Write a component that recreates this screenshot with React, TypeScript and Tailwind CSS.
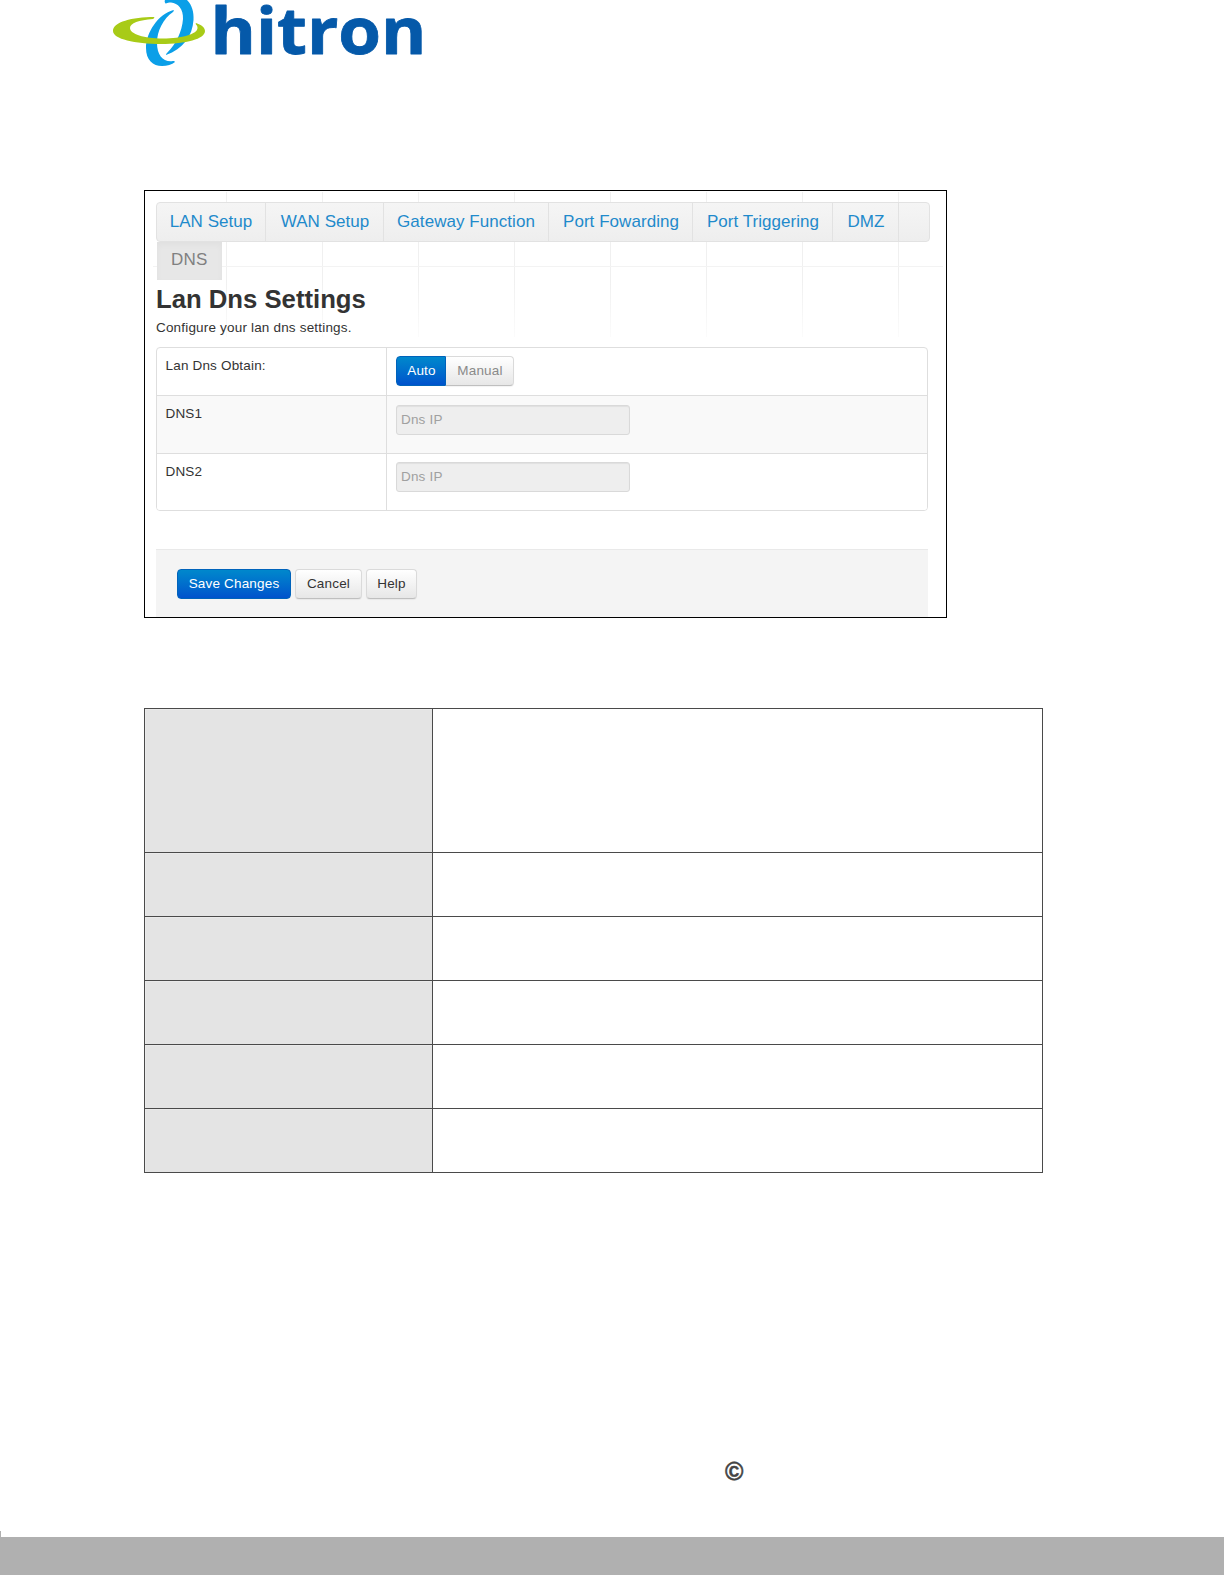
import React from "react";

const tabs = [
  { label: "LAN Setup", cls: "w-[109px]" },
  { label: "WAN Setup", cls: "w-[118px] pl-px" },
  { label: "Gateway Function", cls: "w-[165px]" },
  { label: "Port Fowarding", cls: "w-[144px] pl-px" },
  { label: "Port Triggering", cls: "w-[140px] pl-px" },
  { label: "DMZ", cls: "w-[66px] pl-px" },
];

const descRows = [
  "h-[144px]",
  "h-[64px]",
  "h-[64px]",
  "h-[64px]",
  "h-[64px]",
  "h-[64px]",
];

function Logo() {
  return (
    <svg className="ml-[100px] block h-[80px] w-[340px] shrink-0 overflow-visible" viewBox="0 0 340 80">
      <path
        d="M65 0H87C92 5 94 12 93.500 20C92.500 36 83 49 66 55C66 54 66.500 53.500 67 53C76 44 82 32 83 19C83.500 9 78 3 71 2.500C69 2.500 67 3 65.500 3.500C64.500 2 64.500 1 65 0Z"
        fill="#0b9fe8"
      />
      <path
        d="M73.500 10C58 14 46 33 46 48C46 60 53 66 62 66C67 66 72 64.500 75 62C74.500 61 73.500 61 72 61.200C63 62 57 55 57 43C57 31 63 19 73 12C74 11 74 10.500 73.500 10Z"
        fill="#0b9fe8"
      />
      <path
        d="M54.200 17C32 17 13 22 13 31C13 39 35 44 61 44C86 44 105 39 105 31C105 27.500 101 24.500 96 23C95.500 23.500 95.500 24 96 24.500C97 25.500 97.500 26.500 97.500 28C97.500 34 82 38.500 63 38.500C44 38.500 30 34 30 28C30 23 39 20 53 19C54 18.500 54.500 18 54.200 17Z"
        fill="#a8cb17"
      />
      <text
        x="110.500"
        y="53.500"
        textLength="216"
        lengthAdjust="spacingAndGlyphs"
        className="font-['Open_Sans',sans-serif] font-bold"
        fontSize="65"
        fill="#0559a9"
        stroke="#0559a9"
        strokeWidth="0.800"
        strokeLinejoin="round"
      >
        hitron
      </text>
    </svg>
  );
}

function DnsRow({ label, last }: { label: string; last?: boolean }) {
  return (
    <div
      className={
        last
          ? "flex h-[57px] bg-white"
          : "flex h-[58px] border-b border-[#dedede] bg-[#f9f9f9]"
      }
    >
      <div className="w-[230px] border-r border-[#dedede] pt-[8px] pl-[8.5px]">{label}</div>
      <div className={last ? "pt-[8px] pl-[9px]" : "pt-[9px] pl-[9px]"}>
        <div className="h-[30px] w-[234px] rounded-[3px] border border-[#d9d9d9] bg-[#eeeeee] pt-[4px] pl-[4px] text-[#a0a0a0] shadow-[inset_0_1px_1px_rgba(0,0,0,0.06)]">
          Dns IP
        </div>
      </div>
    </div>
  );
}

const blueBtn =
  "bg-gradient-to-b from-[#0088cc] to-[#0052cc] text-white border border-[#0063bb]";
const greyBtn =
  "border border-[#dadada] border-b-[#bfbfbf] bg-gradient-to-b from-white to-[#e7e7e7] shadow-[0_1px_1px_rgba(0,0,0,0.05)]";

export default function App() {
  return (
    <div className="flex h-[1584px] w-[1224px] flex-col overflow-hidden bg-white font-['Liberation_Sans',Arial,sans-serif]">
      <Logo />

      <section className="relative mt-[110px] ml-[144px] h-[428px] w-[803px] shrink-0 overflow-hidden border border-black text-[13.5px] leading-[20px] tracking-[0.18px] text-[#333333]">
        <div className="absolute top-[1px] left-[81px] h-[145px] w-[674px] bg-[repeating-linear-gradient(90deg,#f0f0f0_0px,#f0f0f0_1px,transparent_1px,transparent_96px)]" />
        <div className="absolute top-[75px] left-[8px] h-px w-[790px] bg-[#f3f3f3]" />
        <div className="absolute top-[90px] left-0 h-[58px] w-full bg-gradient-to-b from-white/0 to-white/80" />

        <div className="relative ml-[11px] flex w-[774px] flex-col pt-[11px]">
          <nav className="flex h-[40px] w-[774px] rounded-[4px] border border-[#e2e2e2] bg-gradient-to-b from-[#f5f5f5] to-[#eeeeee] text-[17px] leading-[37px] tracking-[0.05px] text-[#1f8acb]">
            {tabs.map((t) => (
              <div
                key={t.label}
                className={`${t.cls} border-r border-[#e2e2e2] text-center whitespace-nowrap`}
              >
                {t.label}
              </div>
            ))}
          </nav>
          <div className="ml-[1px] h-[38px] w-[65px] bg-[#e7e7e7] pl-[14px] text-[17px] leading-[36px] text-[#808080] shadow-[inset_0_3px_6px_rgba(0,0,0,0.03)]">
            DNS
          </div>
          <h1 className="mt-[2px] h-[34px] text-[25.7px] leading-[34px] font-bold tracking-normal whitespace-nowrap">
            Lan Dns Settings
          </h1>
          <p className="mt-[2px] h-[20px] whitespace-nowrap">Configure your lan dns settings.</p>

          <div className="mt-[9px] h-[164px] w-[772px] overflow-hidden rounded-[4px] border border-[#dedede] bg-white">
            <div className="flex h-[48px] border-b border-[#dedede]">
              <div className="w-[230px] border-r border-[#dedede] pt-[8px] pl-[8.5px]">
                Lan Dns Obtain:
              </div>
              <div className="flex pt-[8px] pl-[9px] leading-[28px]">
                <div className={`h-[30px] w-[50px] rounded-l-[4px] pl-px text-center ${blueBtn}`}>Auto</div>
                <div className={`h-[30px] w-[68px] rounded-r-[4px] border-l-0 pl-px text-center text-[#8a8a8a] ${greyBtn}`}>
                  Manual
                </div>
              </div>
            </div>
            <DnsRow label="DNS1" />
            <DnsRow label="DNS2" last />
          </div>

          <div className="mt-[38px] flex h-[80px] w-[772px] gap-[4px] border-t border-[#e9e9e9] bg-[#f4f4f4] pt-[19px] pl-[21px] text-center leading-[27px]">
            <div className={`h-[30px] w-[114px] rounded-[4px] ${blueBtn}`}>Save Changes</div>
            <div className={`h-[30px] w-[67px] rounded-[4px] ${greyBtn}`}>Cancel</div>
            <div className={`h-[30px] w-[51px] rounded-[4px] ${greyBtn}`}>Help</div>
          </div>
        </div>
      </section>

      <section className="mt-[90px] ml-[144px] w-[899px] shrink-0 border border-b-0 border-[#4a4a4a]">
        {descRows.map((h, i) => (
          <div key={i} className={`flex border-b border-[#4a4a4a] ${h}`}>
            <div className="w-[288px] border-r border-[#4a4a4a] bg-[#eaeaea] pt-px pl-px">
              <div className="h-full w-full bg-[#e4e4e4]" />
            </div>
          </div>
        ))}
      </section>

      <div className="mt-[283px] ml-[725px] h-[30px] text-[25px] leading-[30px] font-bold text-[#444444] [-webkit-text-stroke:0.5px_#444444]">
        ©
      </div>

      <footer className="mt-auto mb-[9px] flex shrink-0 flex-col">
        <div className="h-[6px] w-px bg-[#b0b0b0]" />
        <div className="h-[38px] bg-[#b0b0b0]" />
      </footer>
    </div>
  );
}
